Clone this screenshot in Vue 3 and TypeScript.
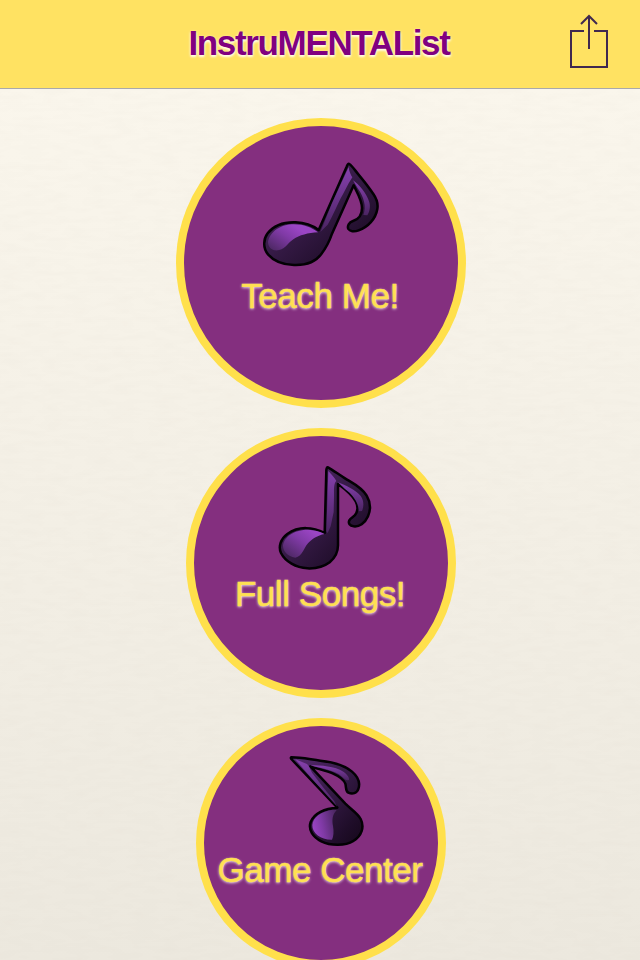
<script setup lang="ts">
interface MenuItem {
  label: string
  size: 'large' | 'medium' | 'small'
  width: number
  height: number
  outline: string
  head: string
  headEdge: [number, number, number, number]
  stem: string
  flag: string
}

const items: MenuItem[] = [
  {
    label: 'Teach Me!',
    size: 'large',
    width: 142,
    height: 120,
    outline:
      'M298 42 C305 46 315 61 325 73 C340 91 356 111 370 132 C381 148 385 160 382 177 C377 207 354 231 326 241 C312 246 299 244 295 237 C291 228 297 217 309 213 C326 208 336 194 336 174 C336 151 321 127 311 106 L246 251 C239 272 230 291 214 312 C196 337 163 346 132 345 C101 344 71 333 54 313 C38 294 40 267 53 250 C73 224 106 216 137 217 C164 218 187 226 206 240 L290 50 C292 44 295 40 298 42 Z',
    head:
      'M54 276 C59 246 91 223 132 223 C162 223 185 232 204 247 C174 249 148 255 130 268 C109 282 104 304 73 301 C61 298 54 287 54 276 Z',
    headEdge: [125, 222, 70, 302],
    stem: 'M296 51 C297 65 303 75 307 82 L296 100 L278 134 C263 159 250 196 233 224 L211 246 L246 160 Z',
    flag: 'M309 91 C326 102 350 130 358 157 C362 172 358 187 352 196 L340 195 C350 169 341 140 324 116 Z',
  },
  {
    label: 'Full Songs!',
    size: 'medium',
    width: 112,
    height: 119,
    outline:
      'M189 37 C203 45 221 58 240 70 C263 84 291 97 305 122 C318 144 318 163 309 184 C300 205 282 216 266 214 C254 213 249 204 253 196 C257 188 269 186 274 174 C284 153 270 132 254 116 C243 105 232 96 219 87 L219 271 C219 291 211 308 194 322 C173 338 151 341 127 340 C93 338 61 320 48 294 C39 274 48 251 67 237 C101 212 144 216 179 234 L184 45 C185 39 186 36 189 37 Z',
    head:
      'M54 272 C57 244 90 224 129 224 C149 225 164 229 179 237 C157 241 141 252 129 265 C115 281 113 303 91 308 C67 303 54 288 54 272 Z',
    headEdge: [135, 225, 75, 308],
    stem: 'M190 48 C199 58 209 68 214 78 C206 84 207 105 207 124 L206 171 L197 214 L188 234 L184 229 Z',
    flag: 'M219 82 C241 91 273 105 287 123 C297 136 297 155 291 168 L281 169 C282 141 260 116 239 101 Z',
  },
  {
    label: 'Game Center',
    size: 'small',
    width: 92,
    height: 105,
    outline:
      'M49 37 C78 37 104 43 136 47 C174 51 206 59 231 80 C251 97 256 115 250 132 C246 145 232 148 220 143 C211 138 214 126 211 116 C206 102 191 93 173 85 C150 76 126 71 106 64 L211 176 C229 194 247 204 257 222 C269 246 260 273 235 288 C210 304 165 302 139 289 C113 276 99 254 107 231 C117 205 149 190 187 188 L49 42 C47 39 47 37 49 37 Z',
    head:
      'M112 240 C114 216 138 199 174 194 L185 195 C171 210 171 226 174 243 C177 260 176 274 171 284 C139 285 111 265 112 240 Z',
    headEdge: [113, 252, 186, 237],
    stem: 'M61 43 L96 57 C104 64 105 74 111 83 L146 129 L177 167 L187 185 L172 169 L109 99 Z',
    flag: 'M106 61 C139 61 179 64 205 80 C220 91 223 99 222 105 C214 108 209 102 201 95 C178 75 141 71 106 61 Z',
  },
]
</script>

<template>
  <main class="screen">
    <svg class="paper" width="640" height="960" aria-hidden="true">
      <filter id="grain" x="0" y="0" width="100%" height="100%">
        <feTurbulence type="fractalNoise" baseFrequency="0.045 0.17" numOctaves="2" seed="8" />
        <feColorMatrix values="0 0 0 0 .6  0 0 0 0 .55  0 0 0 0 .48  .11 0 0 0 -.04" />
      </filter>
      <rect width="640" height="960" filter="url(#grain)" />
    </svg>
    <header class="bar">
      <span></span>
      <h1 class="title">InstruMENTAList</h1>
      <button class="share" aria-label="Share">
        <svg width="40" height="56" viewBox="0 0 40 56" fill="none" stroke="#40284f" stroke-width="2">
          <path d="M16 17H3V53H39V17H26" />
          <path d="M21 35V2M13 10L21 2L29 10" />
        </svg>
      </button>
    </header>
    <nav class="menu">
      <button v-for="(item, i) in items" :key="item.label" class="disc" :class="item.size">
        <svg
          class="note"
          :width="item.width"
          :height="item.height"
          :viewBox="`0 0 ${item.width * 3} ${item.height * 3}`"
          aria-hidden="true"
        >
          <defs>
            <linearGradient :id="`body${i}`" x1="0" y1="0" x2="1" y2="1">
              <stop offset="0" stop-color="#582a73" />
              <stop offset=".45" stop-color="#371b48" />
              <stop offset=".8" stop-color="#1f0d29" />
              <stop offset="1" stop-color="#150719" />
            </linearGradient>
            <linearGradient
              :id="`head${i}`"
              gradientUnits="userSpaceOnUse"
              :x1="item.headEdge[0]"
              :y1="item.headEdge[1]"
              :x2="item.headEdge[2]"
              :y2="item.headEdge[3]"
            >
              <stop offset="0" stop-color="#9a45c4" />
              <stop offset=".4" stop-color="#803aa6" />
              <stop offset="1" stop-color="#4e2865" />
            </linearGradient>
            <linearGradient :id="`stem${i}`" x1="0" y1="0" x2="0" y2="1">
              <stop offset="0" stop-color="#8640ae" />
              <stop offset="1" stop-color="#4b2462" />
            </linearGradient>
          </defs>
          <path :d="item.outline" :fill="`url(#body${i})`" stroke="#030104" stroke-width="7.5" stroke-linejoin="round" />
          <path :d="item.head" :fill="`url(#head${i})`" />
          <path :d="item.stem" :fill="`url(#stem${i})`" />
          <path :d="item.flag" :fill="`url(#stem${i})`" />
        </svg>
        <span class="label">{{ item.label }}</span>
      </button>
    </nav>
  </main>
</template>

<style>
body {
  margin: 0;
  overflow: hidden;
}
</style>

<style scoped>
.screen {
  position: relative;
  width: 640px;
  height: 960px;
  overflow: hidden;
  background: linear-gradient(#faf6ec 88px, #ece8de 960px);
  font-family: "Liberation Sans", Arial, sans-serif;
}
.paper {
  position: absolute;
  inset: 0;
}
button {
  margin: 0;
  padding: 0;
  border: 0;
  background: none;
  font: inherit;
}
.bar {
  position: relative;
  display: grid;
  grid-template-columns: 72px 1fr 72px;
  align-items: center;
  box-sizing: border-box;
  height: 89px;
  background: #ffe262;
  border-bottom: 1px solid #a9a9ab;
}
.title {
  margin: 0;
  padding: 0 2px 2px 0;
  text-align: center;
  font-size: 35px;
  line-height: 40px;
  font-weight: 700;
  letter-spacing: -1.35px;
  white-space: nowrap;
  color: #800080;
  text-shadow: 0 1px 3px #fffef6, 0 2px 2px #fff6c8;
}
.share {
  display: flex;
  height: 60px;
  padding-bottom: 4px;
}
.menu {
  position: relative;
  display: flex;
  flex-direction: column;
  align-items: center;
  gap: 20px;
  padding: 29px 0 0 2px;
}
.disc {
  display: flex;
  flex: none;
  flex-direction: column;
  align-items: center;
  box-sizing: border-box;
  border: 8px solid #ffe04b;
  border-radius: 50%;
  background: #842f7f;
}
.large {
  width: 290px;
  height: 290px;
  padding-top: 24px;
}
.medium {
  width: 270px;
  height: 270px;
  padding-top: 19px;
}
.small {
  width: 250px;
  height: 250px;
  padding-top: 19px;
}
.note {
  display: block;
  flex: none;
}
.label {
  padding-right: 2px;
  font-size: 35px;
  line-height: 40px;
  letter-spacing: -0.45px;
  white-space: nowrap;
  color: #ffe052;
  -webkit-text-stroke: 0.5px #ffe052;
  text-shadow: 0 1px 3px rgba(255, 255, 255, 0.9);
}
.large .label {
  margin-top: 6px;
}
</style>
